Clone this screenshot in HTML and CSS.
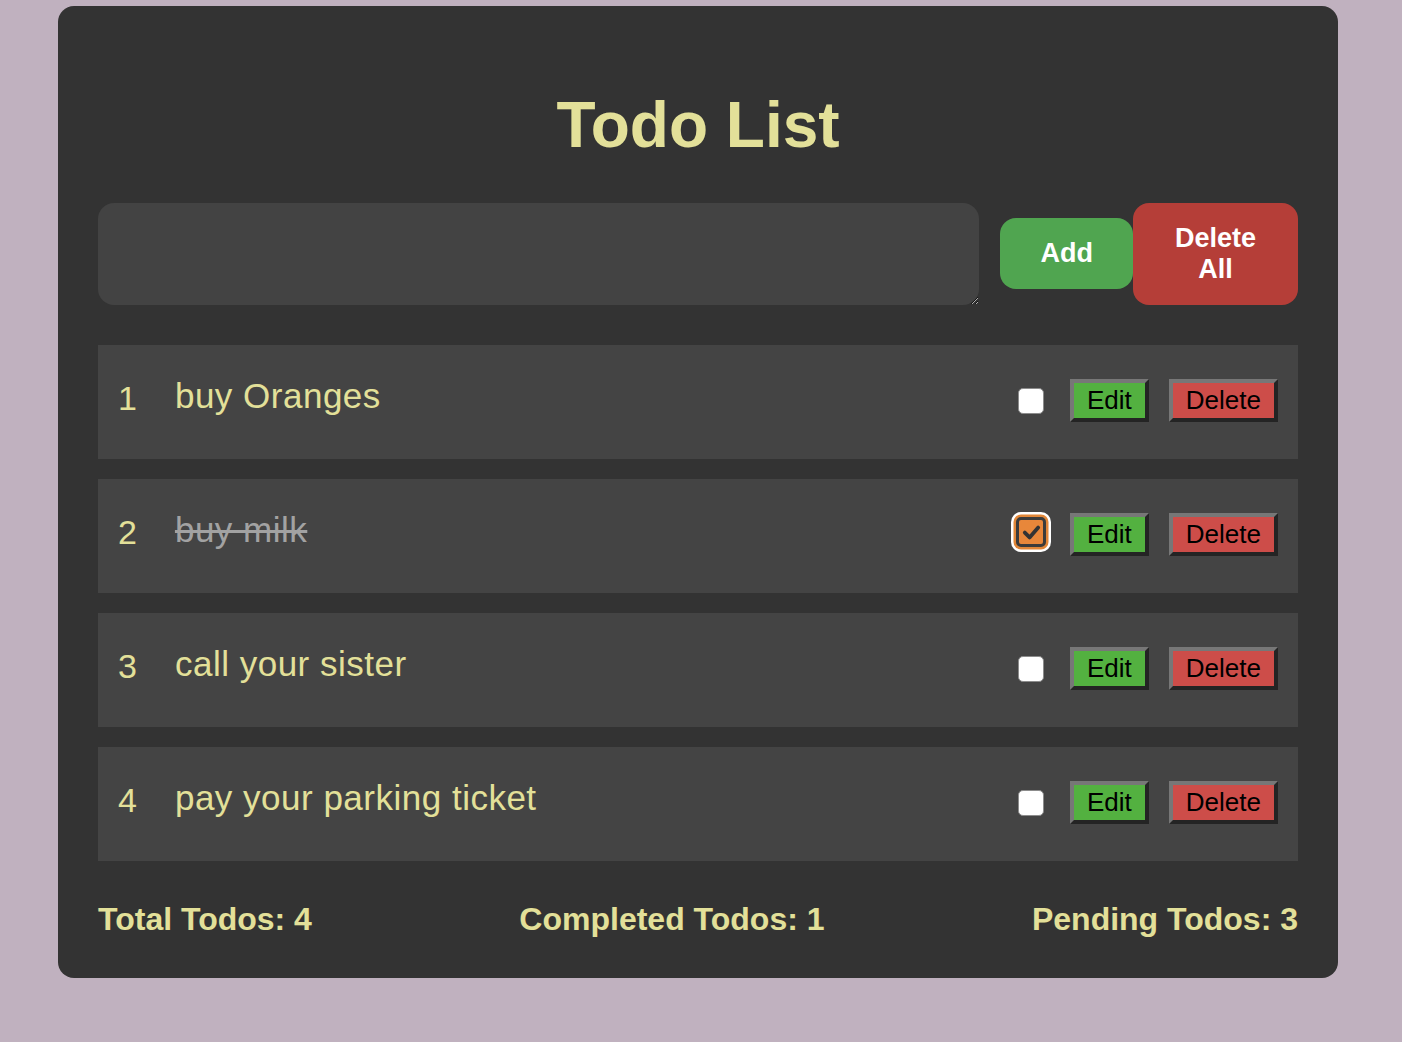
FILE: index.html
```html
<!DOCTYPE html>
<html lang="en">
<head>
<meta charset="utf-8">
<title>Todo List</title>
<link rel="stylesheet" href="styles.css">
</head>
<body>
<main class="app">
  <h1 class="title">Todo List</h1>
  <div class="composer">
    <textarea class="composer-input" aria-label="New todo"></textarea>
    <button class="btn-add">Add</button>
    <button class="btn-clear">Delete All</button>
  </div>
  <ul class="todo-list">
    <li class="todo">
      <span class="todo-num">1</span>
      <span class="todo-text">buy Oranges</span>
      <span class="check" role="checkbox" aria-checked="false"></span>
      <button class="btn-edit">Edit</button>
      <button class="btn-delete">Delete</button>
    </li>
    <li class="todo">
      <span class="todo-num">2</span>
      <span class="todo-text done">buy milk</span>
      <span class="check checked" role="checkbox" aria-checked="true"><svg viewBox="0 0 23 23" width="23" height="23"><path d="M4.8 11.6 L9.6 16.4 L18.2 6.6" fill="none" stroke="#333" stroke-width="3.8" stroke-linecap="round" stroke-linejoin="round"/></svg></span>
      <button class="btn-edit">Edit</button>
      <button class="btn-delete">Delete</button>
    </li>
    <li class="todo">
      <span class="todo-num">3</span>
      <span class="todo-text">call your sister</span>
      <span class="check" role="checkbox" aria-checked="false"></span>
      <button class="btn-edit">Edit</button>
      <button class="btn-delete">Delete</button>
    </li>
    <li class="todo">
      <span class="todo-num">4</span>
      <span class="todo-text">pay your parking ticket</span>
      <span class="check" role="checkbox" aria-checked="false"></span>
      <button class="btn-edit">Edit</button>
      <button class="btn-delete">Delete</button>
    </li>
  </ul>
  <footer class="stats">
    <span>Total Todos: 4</span>
    <span>Completed Todos: 1</span>
    <span>Pending Todos: 3</span>
  </footer>
</main>
</body>
</html>
```
FILE: styles.css
```css
body {
  margin: 0;
  background: #c0b1bf;
  font-family: "Liberation Sans", Arial, sans-serif;
}

.app {
  box-sizing: border-box;
  width: 1280px;
  margin: 6px 0 0 58px;
  padding: 40px;
  background: #333333;
  border-radius: 16px;
}

.title {
  margin: 42px 0 41px;
  text-align: center;
  font-size: 64px;
  font-weight: bold;
  line-height: normal;
  color: #e3e099;
}

.composer {
  display: flex;
  align-items: center;
}

.composer-input {
  flex: 1;
  box-sizing: border-box;
  height: 102px;
  margin: 0;
  border: none;
  outline: none;
  border-radius: 16px;
  background: #434343;
  color: #e3e099;
  font-family: "Liberation Sans", Arial, sans-serif;
  font-size: 24px;
  padding: 10px 16px;
}

.btn-add,
.btn-clear {
  border: none;
  border-radius: 16px;
  color: #ffffff;
  font-family: "Liberation Sans", Arial, sans-serif;
  font-size: 27px;
  font-weight: bold;
  line-height: normal;
  padding: 20px 40px;
}

.btn-add {
  margin-left: 21px;
  margin-bottom: 2px;
  background: #50a550;
}

.btn-clear {
  width: min-content;
  padding: 20px 42px;
  background: #b53e38;
}

.todo-list {
  list-style: none;
  margin: 40px 0 0;
  padding: 0;
  display: flex;
  flex-direction: column;
  gap: 20px;
}

.todo {
  box-sizing: border-box;
  display: flex;
  align-items: center;
  height: 114px;
  padding: 0 20px;
  background: #444444;
}

.todo-num {
  font-size: 34px;
  line-height: normal;
  color: #e3e099;
  margin-right: 38px;
  margin-bottom: 7px;
}

.todo-text {
  flex: 1;
  font-size: 35px;
  letter-spacing: 0.5px;
  line-height: normal;
  color: #e3e099;
  margin-bottom: 13px;
}

.todo-text.done {
  color: #a2a2a2;
  text-decoration: line-through;
  text-decoration-color: #a2a2a2;
}

.check {
  box-sizing: border-box;
  width: 26px;
  height: 26px;
  margin-right: 26px;
  margin-bottom: 2px;
  border: 1.5px solid #8c8c8c;
  border-radius: 5px;
  background: #ffffff;
}

.check.checked {
  width: 30px;
  height: 30px;
  margin: -2px 24px 0 -2px;
  position: relative;
  top: -3px;
  border: 3px solid #3b3b3b;
  border-radius: 5px;
  background: #e8873a;
  box-shadow: 0 0 0 2.5px #e08638, 0 0 0 5px #ffffff;
  display: flex;
  align-items: center;
  justify-content: center;
}

.btn-edit,
.btn-delete {
  box-sizing: border-box;
  font-family: "Liberation Sans", Arial, sans-serif;
  font-size: 26px;
  line-height: normal;
  color: #000000;
  padding: 2px 13px;
  border-style: solid;
  border-width: 4px;
  border-color: #777777 #242424 #242424 #777777;
  border-radius: 0;
  margin-bottom: 4px;
}

.btn-edit {
  background: #53b140;
  margin-right: 20px;
}

.btn-delete {
  background: #cd4d49;
}

.stats {
  display: flex;
  justify-content: space-between;
  margin: 40px 0 0;
  font-size: 32px;
  font-weight: bold;
  line-height: normal;
  color: #e3e099;
}
```
